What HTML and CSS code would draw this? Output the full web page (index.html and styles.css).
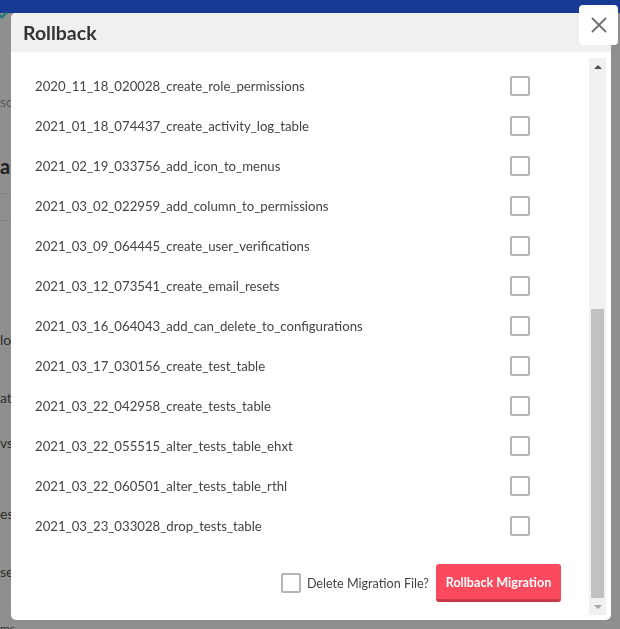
FILE: index.html
```html
<!DOCTYPE html>
<html>
<head>
<meta charset="utf-8">
<link rel="stylesheet" href="styles.css">
</head>
<body>
<div class="page">
  <div class="topbar"><span class="chev"></span></div>
  <div class="side">
    <div class="frag search">sc</div>
    <div class="frag title">as</div>
    <div class="rule"></div>
    <div class="rule r2"></div>
    <div class="frag f1">lo</div>
    <div class="frag f2">at</div>
    <div class="frag f3">vs</div>
    <div class="frag f4">es</div>
    <div class="frag f5">se</div>
    <div class="frag f6">ms</div>
  </div>
</div>

<div class="modal">
  <div class="modal-header">Rollback</div>
  <div class="modal-body">
    <div class="content">
      <div class="row"><span>2020_11_18_020028_create_role_permissions</span><span class="cb"></span></div>
      <div class="row"><span>2021_01_18_074437_create_activity_log_table</span><span class="cb"></span></div>
      <div class="row"><span>2021_02_19_033756_add_icon_to_menus</span><span class="cb"></span></div>
      <div class="row"><span>2021_03_02_022959_add_column_to_permissions</span><span class="cb"></span></div>
      <div class="row"><span>2021_03_09_064445_create_user_verifications</span><span class="cb"></span></div>
      <div class="row"><span>2021_03_12_073541_create_email_resets</span><span class="cb"></span></div>
      <div class="row"><span>2021_03_16_064043_add_can_delete_to_configurations</span><span class="cb"></span></div>
      <div class="row"><span>2021_03_17_030156_create_test_table</span><span class="cb"></span></div>
      <div class="row"><span>2021_03_22_042958_create_tests_table</span><span class="cb"></span></div>
      <div class="row"><span>2021_03_22_055515_alter_tests_table_ehxt</span><span class="cb"></span></div>
      <div class="row"><span>2021_03_22_060501_alter_tests_table_rthl</span><span class="cb"></span></div>
      <div class="row"><span>2021_03_23_033028_drop_tests_table</span><span class="cb"></span></div>
      <div class="footer">
        <label class="del"><span class="cb small"></span>Delete Migration File?</label>
        <button class="btn">Rollback Migration</button>
      </div>
    </div>
    <div class="scrollbar">
      <div class="sb-btn"><span class="arrow up"></span></div>
      <div class="sb-track"><div class="sb-thumb"></div></div>
      <div class="sb-btn"><span class="arrow down"></span></div>
    </div>
  </div>
</div>
<button class="close" aria-label="Close">
  <svg width="16" height="16" viewBox="0 0 16 16"><path d="M1.5 1.5 L14.5 14.5 M14.5 1.5 L1.5 14.5" stroke="#707070" stroke-width="1.8" fill="none" stroke-linecap="round"/></svg>
</button>
</body>
</html>
```
FILE: styles.css
```css
* { box-sizing: border-box; }
html, body { margin: 0; padding: 0; }
body {
  width: 620px; height: 629px; overflow: hidden;
  background: #8f8f8f;
  font-family: Lato, "Noto Sans", sans-serif;
}
.page { height: 629px; }
.topbar { height: 13px; background: #173a94; position: relative; }
.chev {
  position: absolute; left: -2px; top: 9px; width: 8px; height: 8px;
  border-right: 2px solid #1f7a78; border-bottom: 2px solid #1f7a78;
  transform: rotate(45deg);
}
.side { position: relative; height: 616px; }
.frag { position: absolute; left: 0; color: #2e2e2e; font-size: 14px; }
.search { top: 80px; color: #5a5a5a; }
.title { top: 141px; font-size: 20px; font-weight: 700; color: #1e1e1e; }
.rule { position: absolute; left: 0; width: 12px; top: 180px; border-top: 1px solid #838383; }
.r2 { top: 207px; }
.f1 { top: 318px; }
.f2 { top: 376px; }
.f3 { top: 421px; }
.f4 { top: 492px; }
.f5 { top: 550px; }
.f6 { top: 608px; font-size: 12px; }

.modal {
  position: fixed; left: 11px; top: 13px; width: 600px; height: 607px;
  background: #fff; border-radius: 5px; overflow: hidden;
  display: flex; flex-direction: column;
}
.modal-header {
  height: 39px; flex: none; background: #f0f0f0;
  padding: 0 12px; display: flex; align-items: center;
  font-size: 19.5px; font-weight: 700; color: #333;
}
.modal-body { flex: 1; display: flex; min-height: 0; }
.content { flex: 1; padding: 14px 0 0 24px; }
.row {
  height: 40px; display: flex; align-items: center; justify-content: space-between;
  width: 495px; font-size: 13.2px; color: #444;
}
.cb {
  display: inline-block; width: 20px; height: 20px; border: 2px solid #b5b5b5;
  border-radius: 2px; background: #fff; flex: none;
}
.footer {
  display: flex; justify-content: flex-end; align-items: center;
  padding-right: 28px; margin-top: 18px; gap: 7px;
}
.del { display: flex; align-items: center; gap: 6px; font-size: 12.6px; color: #444; }
.btn {
  font-family: inherit; font-size: 12.6px; font-weight: 700; color: #fff;
  background: #fb4a5e; border: none; border-bottom: 3px solid #c9384a;
  border-radius: 3px; width: 125px; height: 38px; padding: 0; padding-top: 2px;
}
.scrollbar {
  width: 17px; flex: none; margin: 6px 5px 5px 0; background: #f1f1f1;
  display: flex; flex-direction: column;
}
.sb-btn { height: 17px; display: flex; align-items: center; justify-content: center; flex: none; }
.sb-track { flex: 1; display: flex; flex-direction: column; justify-content: flex-end; }
.sb-thumb { height: 289px; margin: 0 2px; background: #c1c1c1; }
.arrow { width: 0; height: 0; border-left: 4px solid transparent; border-right: 4px solid transparent; }
.arrow.up { border-bottom: 4px solid #505050; }
.arrow.down { border-top: 4px solid #a3a3a3; }
.close {
  position: fixed; left: 579px; top: 5px; width: 39px; height: 40px;
  background: #fff; border: none; border-radius: 4px; padding: 0;
  display: flex; align-items: center; justify-content: center;
}
```
